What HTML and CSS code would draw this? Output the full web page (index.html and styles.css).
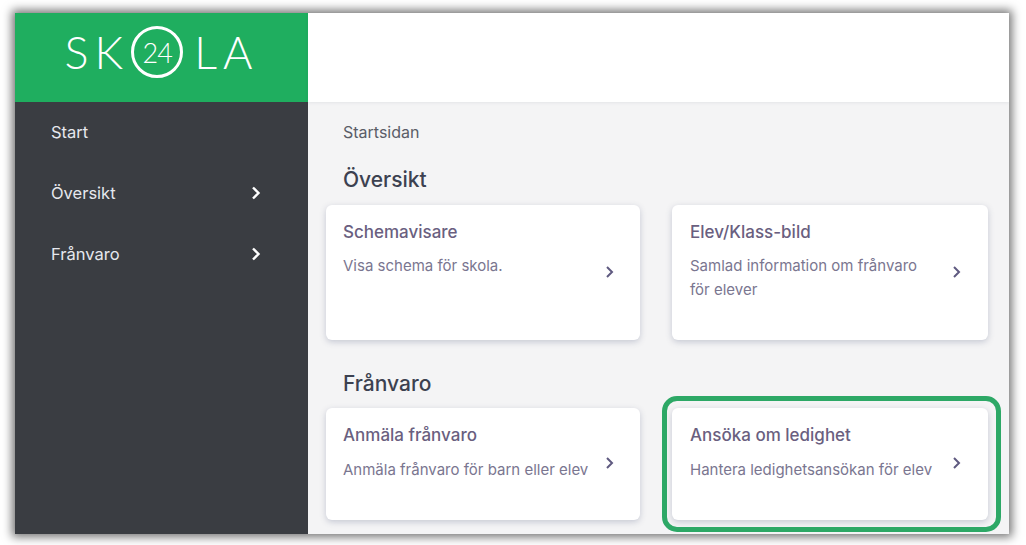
FILE: index.html
```html
<!DOCTYPE html>
<html lang="sv">
<head>
    <meta charset="UTF-8">
    <meta name="viewport" content="width=device-width, initial-scale=1.0">
    <title>Skola24 - Startsidan</title>
    <link rel="stylesheet" href="styles.css">
</head>
<body>
    <div class="window">
        <aside class="sidebar">
            <div class="logo">
                <span class="logo-text">SK</span>
                <span class="logo-ring">24</span>
                <span class="logo-text logo-end">LA</span>
            </div>
            <nav class="menu">
                <a class="menu-item">Start</a>
                <a class="menu-item">Översikt
                    <svg class="menu-arrow" viewBox="0 0 10 14"><path d="M2 1.5 7.5 7 2 12.5"/></svg>
                </a>
                <a class="menu-item">Frånvaro
                    <svg class="menu-arrow" viewBox="0 0 10 14"><path d="M2 1.5 7.5 7 2 12.5"/></svg>
                </a>
            </nav>
        </aside>
        <div class="page">
            <header class="topbar"></header>
            <main class="content">
                <div class="crumb">Startsidan</div>

                <h2 class="section-title">Översikt</h2>
                <div class="cards cards-tall">
                    <a class="card">
                        <div class="card-text">
                            <h3>Schemavisare</h3>
                            <p>Visa schema för skola.</p>
                        </div>
                        <svg class="card-arrow" viewBox="0 0 10 14"><path d="M2 2 7 7 2 12"/></svg>
                    </a>
                    <a class="card">
                        <div class="card-text">
                            <h3>Elev/Klass-bild</h3>
                            <p>Samlad information om frånvaro för elever</p>
                        </div>
                        <svg class="card-arrow" viewBox="0 0 10 14"><path d="M2 2 7 7 2 12"/></svg>
                    </a>
                </div>

                <h2 class="section-title section-second">Frånvaro</h2>
                <div class="cards cards-short">
                    <a class="card">
                        <div class="card-text">
                            <h3>Anmäla frånvaro</h3>
                            <p>Anmäla frånvaro för barn eller elev</p>
                        </div>
                        <svg class="card-arrow" viewBox="0 0 10 14"><path d="M2 2 7 7 2 12"/></svg>
                    </a>
                    <a class="card card-marked">
                        <div class="card-text">
                            <h3>Ansöka om ledighet</h3>
                            <p>Hantera ledighetsansökan för elev</p>
                        </div>
                        <svg class="card-arrow" viewBox="0 0 10 14"><path d="M2 2 7 7 2 12"/></svg>
                    </a>
                </div>
            </main>
        </div>
    </div>
</body>
</html>
```

FILE: styles.css
```css
html, body {
    height: 100%;
}

body {
    margin: 0;
    padding: 13px 17px 11px 15px;
    box-sizing: border-box;
    height: 545px;
    overflow: hidden;
    background-color: #fff;
    font-family: 'Inter', sans-serif;
    color: #3c3f4a;
}

.window {
    display: flex;
    height: 100%;
    background: #f4f4f5;
    box-shadow: 0 0 9px 3px rgba(0,0,0,0.55);
    overflow: hidden;
}

.sidebar {
    width: 293px;
    flex-shrink: 0;
    background-color: #3a3d42;
}

.logo {
    height: 89px;
    background-color: #1fae5f;
    display: flex;
    align-items: center;
    justify-content: center;
    color: #fff;
    padding: 0 0 11px 0;
    box-sizing: border-box;
    font-family: 'Lato', sans-serif;
}

.logo-text {
    font-size: 45px;
    font-weight: 300;
    letter-spacing: 6px;
    line-height: 1;
}

.logo-ring {
    width: 46px;
    height: 46px;
    border: 3px solid #fff;
    border-radius: 50%;
    display: flex;
    align-items: center;
    justify-content: center;
    font-size: 27px;
    font-weight: 300;
    letter-spacing: -1px;
    margin: 0 11px 0 2px;
}

.menu {
    margin-top: -1px;
}

.menu-item {
    display: flex;
    align-items: center;
    justify-content: space-between;
    height: 61px;
    padding: 0 47px 0 36px;
    font-size: 16.5px;
    color: #e6e8ee;
}

.menu-arrow {
    width: 10px;
    height: 14px;
    fill: none;
    stroke: #fff;
    stroke-width: 2.4;
}

.page {
    flex: 1;
    display: flex;
    flex-direction: column;
}

.topbar {
    height: 89px;
    background: #fff;
    box-shadow: 0 1px 3px rgba(40,50,80,0.08);
}

.content {
    padding: 20px 21px 0 18px;
}

.crumb {
    font-size: 16px;
    line-height: 20px;
    padding-left: 17px;
    color: #5a5d67;
}

.section-title {
    margin: 25px 0 0;
    padding-left: 17px;
    font-size: 21px;
    font-weight: 500;
    line-height: 26px;
    color: #3c4150;
}

.section-second {
    margin-top: 31px;
}

.cards {
    display: grid;
    grid-template-columns: 314px 316px;
    column-gap: 32px;
    margin-top: 12px;
}

.cards-tall .card {
    height: 135px;
}

.cards-short {
    margin-top: 11px;
}

.cards-short .card {
    height: 112px;
}

.card {
    position: relative;
    display: flex;
    align-items: center;
    background: #fff;
    border-radius: 6px;
    box-shadow: 0 2px 6px rgba(60,70,110,0.25);
    padding: 0 25px 0 17px;
    box-sizing: border-box;
}

.card:nth-child(2) {
    padding: 0 26px 0 18px;
}

.card-text {
    flex: 1;
    align-self: flex-start;
    padding-top: 16px;
}

.card h3 {
    margin: 0;
    font-size: 17px;
    font-weight: 500;
    line-height: 22px;
    color: #6a5f7f;
}

.card p {
    margin: 11px 0 0;
    max-width: 248px;
    font-size: 15px;
    line-height: 24px;
    color: #7a7690;
}

.cards-short p {
    margin-top: 12px;
}

.card-arrow {
    width: 10px;
    height: 14px;
    margin-left: 10px;
    margin-top: -2px;
    fill: none;
    stroke: #5f5a80;
    stroke-width: 2;
    flex-shrink: 0;
}

.card-marked::after {
    content: "";
    position: absolute;
    top: -12px;
    left: -10px;
    right: -13px;
    bottom: -12px;
    border: 5px solid #2da866;
    border-radius: 15px;
}
```
